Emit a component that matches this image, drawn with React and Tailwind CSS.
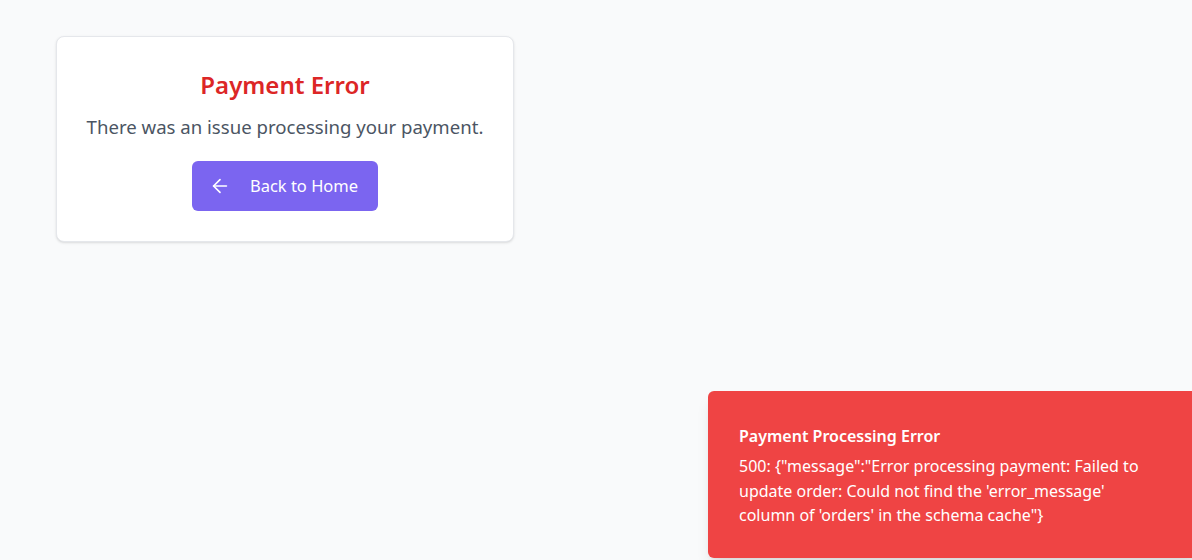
import { ArrowLeft } from 'lucide-react';

const PaymentError = () => {
  return <div className="w-[458px] bg-white border border-gray-200 rounded-lg shadow-sm px-6 pt-8 pb-[30px] flex flex-col items-center text-center">
    <h1 className="text-2xl font-semibold text-[#dc2626] leading-8">Payment Error</h1>
    <p className="mt-3 text-[18.6px] leading-7 text-[#4b5563] whitespace-nowrap">There was an issue processing your payment.</p>
    <button className="mt-5 h-[50px] pl-[17px] pr-5 flex items-center gap-[19px] rounded-md bg-[#7b65f0] text-white text-[16.5px]">
      <ArrowLeft size={22} strokeWidth={1.8} />
      <span>Back to Home</span>
    </button>
  </div>
}

const Toast = () => {
  return <div className="absolute left-[708px] top-[391px] w-[492px] h-[167px] rounded-md bg-[#ef4444] text-white px-[31px] pt-[33px] shadow-lg">
    <p className="font-semibold text-base leading-6">Payment Processing Error</p>
    <p className="mt-[6px] text-base leading-[24.5px] w-[425px]">
      500: {`{"message":"Error processing payment: Failed to update order: Could not find the 'error_message' column of 'orders' in the schema cache"}`}
    </p>
  </div>
}

export default function App() {
  return <div className="relative w-[1192px] h-[560px] overflow-hidden bg-[#f9fafb]" style={{ fontFamily: '"Noto Sans", "Open Sans", sans-serif' }}>
    <div className="pt-9 pl-14">
      <PaymentError />
    </div>
    <Toast />
  </div>
}
